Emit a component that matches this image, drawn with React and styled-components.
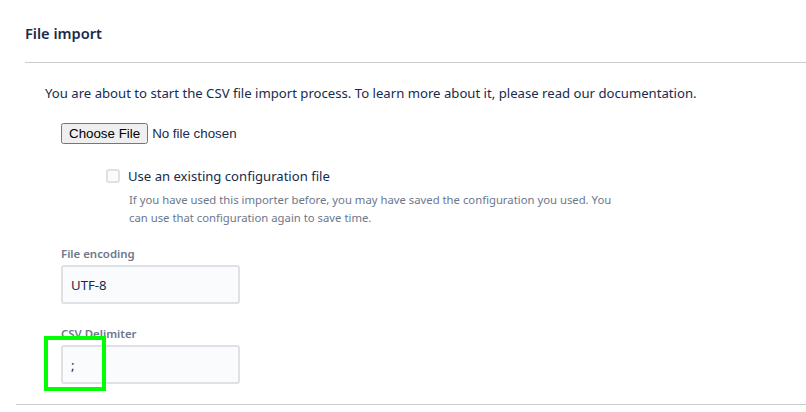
import React from "react";
import styled, { createGlobalStyle } from "styled-components";

const GlobalStyle = createGlobalStyle`
  html, body {
    margin: 0;
    padding: 0;
    background: #ffffff;
  }
  body {
    font-family: "Noto Sans", "Open Sans", sans-serif;
    color: #172b4d;
  }
`;

const Page = styled.div`
  width: 806px;
  height: 412px;
  overflow: hidden;
  position: relative;
`;

const Header = styled.div`
  padding: 23px 0 0 25px;
`;

const Title = styled.h2`
  margin: 0;
  font-size: 14.6px;
  line-height: 20px;
  font-weight: 600;
  color: #172b4d;
`;

const Divider = styled.hr`
  border: none;
  border-top: 1px solid #cccccc;
  margin: ${(p) => p.$margin || "0"};
`;

const Body = styled.div`
  padding: 20px 0 0 45px;
`;

const Intro = styled.p`
  margin: 0;
  font-size: 13.15px;
  line-height: 20px;
`;

const FileRow = styled.div`
  margin: 20px 0 0 16px;
  height: 20px;
  display: flex;
  align-items: center;
  input {
    font-family: Arial, "Liberation Sans", sans-serif;
    font-size: 13.33px;
  }
`;

const CheckGroup = styled.div`
  margin: 23px 0 0 61px;
`;

const CheckRow = styled.label`
  display: flex;
  align-items: center;
  gap: 8px;
  font-size: 13.1px;
  line-height: 20px;
`;

const Box = styled.span`
  width: 14px;
  height: 14px;
  box-sizing: border-box;
  border: 2px solid #dfe1e6;
  border-radius: 3px;
  background: #fafbfc;
`;

const Help = styled.div`
  margin: 5px 0 0 23px;
  max-width: 485px;
  font-size: 11.3px;
  line-height: 18px;
  color: #6b778c;
`;

const Field = styled.div`
  margin: ${(p) => p.$top}px 0 0 16px;
`;

const FieldLabel = styled.div`
  font-size: 11.4px;
  line-height: 16px;
  font-weight: 600;
  color: #6b778c;
  margin-bottom: 3px;
`;

const TextBox = styled.div`
  width: 179px;
  height: 39px;
  box-sizing: border-box;
  border: 2px solid #dfe1e6;
  border-radius: 3px;
  background: #fafbfc;
  padding: 0 8px;
  display: flex;
  align-items: center;
  font-size: 13.2px;
  color: #172b4d;
`;

const Highlight = styled.div`
  position: absolute;
  left: 44px;
  top: 336px;
  width: 62px;
  height: 55px;
  box-sizing: border-box;
  border: 4px solid #00ff00;
  pointer-events: none;
`;

export default function App() {
  return (
    <>
      <GlobalStyle />
      <Page>
        <Header>
          <Title>File import</Title>
          <Divider $margin="19px 0 0 0" />
        </Header>
        <Body>
          <Intro>
            You are about to start the CSV file import process. To learn more
            about it, please read our documentation.
          </Intro>
          <FileRow>
            <input type="file" />
          </FileRow>
          <CheckGroup>
            <CheckRow>
              <Box />
              Use an existing configuration file
            </CheckRow>
            <Help>
              If you have used this importer before, you may have saved the
              configuration you used. You can use that configuration again to
              save time.
            </Help>
          </CheckGroup>
          <Field $top={19}>
            <FieldLabel>File encoding</FieldLabel>
            <TextBox>UTF-8</TextBox>
          </Field>
          <Field $top={22}>
            <FieldLabel>CSV Delimiter</FieldLabel>
            <TextBox>;</TextBox>
          </Field>
        </Body>
        <Divider $margin="20px 0 0 16px" />
        <Highlight />
      </Page>
    </>
  );
}
